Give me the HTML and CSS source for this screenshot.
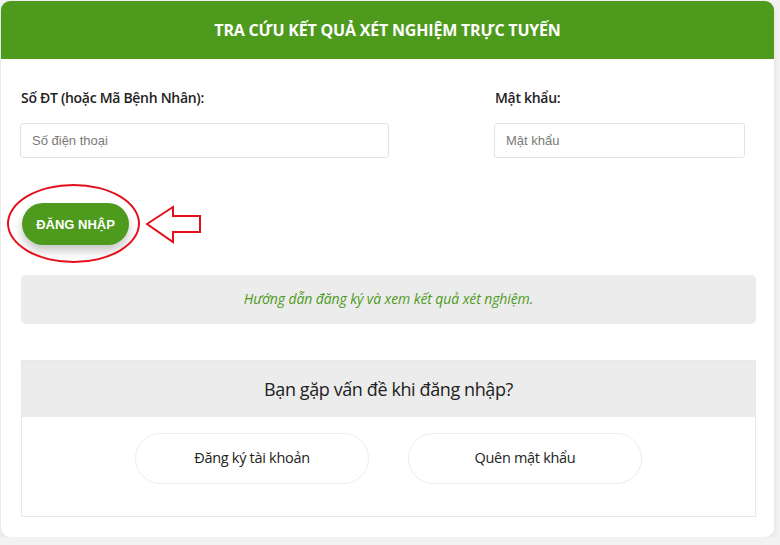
FILE: index.html
```html
<!DOCTYPE html>
<html lang="vi">
<head>
    <meta charset="UTF-8">
    <meta name="viewport" content="width=device-width, initial-scale=1.0">
    <title>Tra cứu kết quả xét nghiệm trực tuyến</title>
    <link rel="stylesheet" href="styles.css">
</head>
<body>
    <div class="lookup-card">
        <!-- Header -->
        <div class="lookup-header">
            <h1 class="lookup-title">TRA CỨU KẾT QUẢ XÉT NGHIỆM TRỰC TUYẾN</h1>
        </div>

        <div class="lookup-body">
            <!-- Login form -->
            <form class="login-form">
                <div class="field-row">
                    <div class="field">
                        <label class="field-label" for="phone">Số ĐT (hoặc Mã Bệnh Nhân):</label>
                        <input class="field-input" id="phone" type="text" placeholder="Số điện thoại">
                    </div>
                    <div class="field">
                        <label class="field-label" for="password">Mật khẩu:</label>
                        <input class="field-input" id="password" type="password" placeholder="Mật khẩu">
                    </div>
                </div>

                <div class="submit-row">
                    <button type="button" class="login-btn">ĐĂNG NHẬP</button>
                    <!-- annotation drawn over the screenshot -->
                    <span class="mark-ellipse"></span>
                    <svg class="mark-arrow" width="60" height="40" viewBox="0 0 60 40">
                        <polygon points="2,19 28,2 28,11 55,11 55,27 28,27 28,37" fill="#fff" stroke="#e3101b" stroke-width="2" stroke-linejoin="miter"/>
                    </svg>
                </div>
            </form>

            <!-- Guide link -->
            <div class="guide-box">
                <a href="#" class="guide-link">Hướng dẫn đăng ký và xem kết quả xét nghiệm.</a>
            </div>

            <!-- Help section -->
            <div class="help-box">
                <div class="help-title">Bạn gặp vấn đề khi đăng nhập?</div>
                <div class="help-actions">
                    <a href="#" class="help-btn">Đăng ký tài khoản</a>
                    <a href="#" class="help-btn">Quên mật khẩu</a>
                </div>
            </div>
        </div>
    </div>
</body>
</html>
```

FILE: styles.css
```css
* {
    margin: 0;
    padding: 0;
    box-sizing: border-box;
}

body {
    font-family: 'Open Sans', 'Noto Sans', sans-serif;
    background: #f2f2f2;
    color: #222;
    padding: 1px 6px 0 1px;
}

.lookup-card {
    width: 773px;
    background: #ffffff;
    border-radius: 9px;
    overflow: hidden;
    box-shadow: 0 2px 6px rgba(0, 0, 0, 0.08);
}

.lookup-header {
    background: #4e9a1d;
    height: 58px;
    display: flex;
    align-items: center;
    justify-content: center;
}

.lookup-title {
    font-family: 'Open Sans', sans-serif;
    font-size: 16px;
    font-weight: 700;
    color: #ffffff;
    letter-spacing: -0.2px;
}

.lookup-body {
    padding: 0 18px 20px 19px;
}

.field-row {
    display: grid;
    grid-template-columns: 369px 251px;
    column-gap: 105px;
    padding-top: 30px;
}

.field-label {
    display: block;
    font-size: 14px;
    font-weight: 600;
    line-height: 18px;
    color: #222;
    margin-bottom: 16px;
    padding-left: 1px;
    letter-spacing: -0.3px;
}

.field-input {
    width: 100%;
    height: 35px;
    border: 1px solid #e3e3e3;
    border-radius: 3px;
    padding: 0 11px;
    font-family: 'Liberation Sans', Arial, sans-serif;
    font-size: 13px;
    color: #333;
    outline: none;
}

.field-input::placeholder {
    color: #7a7a7a;
}

.submit-row {
    position: relative;
    margin-top: 45px;
    height: 42px;
}

.login-btn {
    width: 107px;
    height: 42px;
    margin-left: 2px;
    border: none;
    border-radius: 21px;
    background: #4e9a1d;
    color: #ffffff;
    font-family: 'Liberation Sans', Arial, sans-serif;
    font-size: 13px;
    font-weight: bold;
    cursor: pointer;
    box-shadow: 0 6px 10px rgba(0, 0, 0, 0.22);
}

.mark-ellipse {
    position: absolute;
    left: -13px;
    top: -19px;
    width: 133px;
    height: 79px;
    border: 2px solid #e3101b;
    border-radius: 50%;
    pointer-events: none;
}

.mark-arrow {
    position: absolute;
    left: 125px;
    top: 2px;
}

.guide-box {
    margin-top: 30px;
    margin-left: 1px;
    height: 49px;
    background: #ececec;
    border-radius: 5px;
    display: flex;
    align-items: center;
    justify-content: center;
    padding-bottom: 3px;
}

.guide-link {
    font-size: 14px;
    font-style: italic;
    color: #4e9a1d;
    text-decoration: none;
    letter-spacing: -0.1px;
}

.help-box {
    margin-top: 36px;
    margin-left: 1px;
    border: 1px solid #e8e8e8;
}

.help-title {
    height: 56px;
    background: #ececec;
    display: flex;
    align-items: center;
    justify-content: center;
    font-size: 18px;
    color: #222;
    letter-spacing: -0.4px;
}

.help-actions {
    height: 99px;
    display: flex;
    justify-content: center;
    align-items: flex-start;
    gap: 39px;
    padding-top: 16px;
}

.help-btn {
    width: 234px;
    height: 51px;
    border: 1px solid #ececec;
    border-radius: 26px;
    display: flex;
    align-items: center;
    justify-content: center;
    padding-bottom: 3px;
    font-size: 14.5px;
    color: #222;
    text-decoration: none;
    letter-spacing: -0.3px;
}
```
